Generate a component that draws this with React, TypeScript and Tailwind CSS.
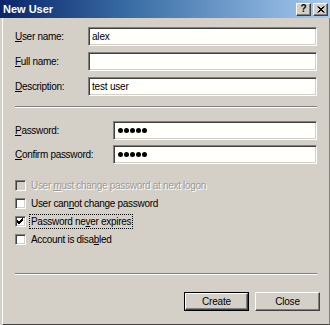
import React from "react";

const font = { fontFamily: '"Liberation Sans", Arial, sans-serif' };

function Field({ u, rest, value, inputLeft, password, mt }: { u: string; rest: string; value?: string; inputLeft: string; password?: boolean; mt: string }) {
  return (
    <div className={`flex items-center h-[19px] ${mt}`}>
      <div className={`pl-[12px] ${inputLeft} shrink-0 text-[10px] tracking-[-0.3px] text-black leading-none`}>
        <span className="underline">{u}</span>
        {rest}
      </div>
      <div className="flex-1 h-[19px] mr-[12px] bg-[#fffffb] border border-t-[#808080] border-l-[#808080] border-b-white border-r-white shadow-[inset_1px_1px_0_#404040,inset_-1px_-1px_0_#d4d0c8] flex items-center pl-[3px] text-[10px] tracking-[-0.2px] leading-none text-black">
        {password ? (
          <div className="flex gap-[1px] pl-[1px]">
            {[0, 1, 2, 3, 4].map((i) => (
              <div key={i} className="w-[5px] h-[5px] rounded-full bg-black" />
            ))}
          </div>
        ) : (
          value
        )}
      </div>
    </div>
  );
}

function Check({ children, disabled, checked, focus }: { children: React.ReactNode; disabled?: boolean; checked?: boolean; focus?: boolean }) {
  return (
    <div className="flex items-center h-[18px] pl-[12px]">
      <div className={`w-[11px] h-[11px] shrink-0 border border-t-[#808080] border-l-[#808080] border-b-white border-r-white shadow-[inset_1px_1px_0_#404040,inset_-1px_-1px_0_#d4d0c8] ${disabled ? "bg-[#d4d0c8]" : "bg-white"} flex items-center justify-center`}>
        {checked && (
          <svg width="7" height="7" viewBox="0 0 7 7">
            <path d="M0 2 L2 4 L6 0 M0 3 L2 5 L6 1 M0 4 L2 6 L6 2" stroke="#000" strokeWidth="1" fill="none" />
          </svg>
        )}
      </div>
      <div className={`ml-[3px] px-[1px] text-[10px] tracking-[-0.3px] leading-[13px] ${focus ? "border border-dotted border-black" : "border border-transparent"} ${disabled ? "text-[#9a9a9a] [text-shadow:1px_1px_0_#fff]" : "text-black"}`}>
        {children}
      </div>
    </div>
  );
}

function Btn({ children, def }: { children: React.ReactNode; def?: boolean }) {
  return (
    <div className={`w-[65px] h-[19px] ${def ? "border border-black" : ""}`}>
      <div className="w-full h-full bg-[#d4d0c8] border border-t-white border-l-white border-b-[#404040] border-r-[#404040] shadow-[inset_-1px_-1px_0_#808080] flex items-center justify-center text-[10px] tracking-[-0.2px] text-black leading-none">
        {children}
      </div>
    </div>
  );
}

function Sep({ mt }: { mt: string }) {
  return <div className={`${mt} mx-[12px] h-[2px] border-t border-t-[#808080] border-b border-b-white`} />;
}

export default function App() {
  return (
    <div style={font} className="w-[330px] h-[325px] bg-[#d4d0c8] flex flex-col overflow-hidden select-none">
      <div className="h-[18px] shrink-0 flex items-center bg-[linear-gradient(to_right,#0a246a,#3a6ea5_40%,#a6caf0)]">
        <div className="pl-[3px] text-white font-bold text-[11px] leading-none">New User</div>
        <div className="ml-auto flex items-center gap-[2px] pr-[2px]">
          <div className="w-[15px] h-[13px] bg-[#d4d0c8] border border-t-white border-l-white border-b-[#404040] border-r-[#404040] shadow-[inset_-1px_-1px_0_#808080] flex items-center justify-center text-[10px] font-bold leading-none text-black">?</div>
          <div className="w-[15px] h-[13px] bg-[#d4d0c8] border border-t-white border-l-white border-b-[#404040] border-r-[#404040] shadow-[inset_-1px_-1px_0_#808080] flex items-center justify-center">
            <svg width="8" height="7" viewBox="0 0 8 7">
              <path d="M0.5 0.5 L6.5 6.5 M1.5 0.5 L7.5 6.5 M6.5 0.5 L0.5 6.5 M7.5 0.5 L1.5 6.5" stroke="#000" strokeWidth="1" />
            </svg>
          </div>
        </div>
      </div>
      <div className="flex-1 flex flex-col border-l border-l-white border-r border-r-[#808080] border-b border-b-[#404040] ml-[2px] pb-[1px]">
        <Field u="U" rest="ser name:" value="alex" inputLeft="w-[85px]" mt="mt-[9px]" />
        <Field u="F" rest="ull name:" value="" inputLeft="w-[85px]" mt="mt-[6px]" />
        <Field u="D" rest="escription:" value="test user" inputLeft="w-[85px]" mt="mt-[6px]" />
        <Sep mt="mt-[10px]" />
        <Field u="P" rest="assword:" inputLeft="w-[110px]" password mt="mt-[13px]" />
        <Field u="C" rest="onfirm password:" inputLeft="w-[110px]" password mt="mt-[5px]" />
        <div className="mt-[12px] flex flex-col">
          <Check disabled>
            User <span className="underline">m</span>ust change password at next logon
          </Check>
          <Check>
            User can<span className="underline">n</span>ot change password
          </Check>
          <Check checked focus>
            Password ne<span className="underline">v</span>er expires
          </Check>
          <Check>
            Account is disa<span className="underline">b</span>led
          </Check>
        </div>
        <Sep mt="mt-[25px]" />
        <div className="mt-[17px] flex justify-end gap-[6px] pr-[9px]">
          <Btn def>Create</Btn>
          <Btn>Close</Btn>
        </div>
      </div>
    </div>
  );
}
